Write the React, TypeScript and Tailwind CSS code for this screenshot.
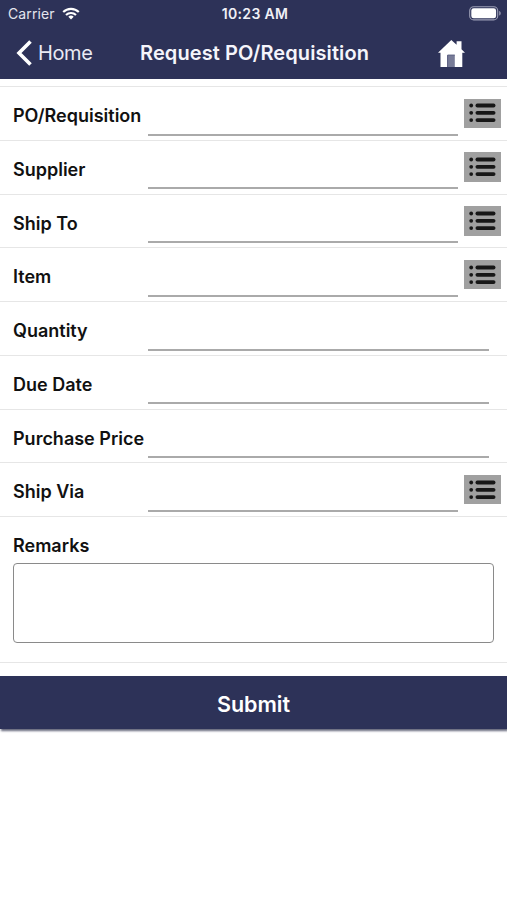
type Field = {
  label: string;
  lookup: boolean;
};

const FIELDS: Field[] = [
  { label: "PO/Requisition", lookup: true },
  { label: "Supplier", lookup: true },
  { label: "Ship To", lookup: true },
  { label: "Item", lookup: true },
  { label: "Quantity", lookup: false },
  { label: "Due Date", lookup: false },
  { label: "Purchase Price", lookup: false },
  { label: "Ship Via", lookup: true },
];

function WifiIcon() {
  return (
    <svg width="18" height="13" viewBox="0 0 18 13" fill="none" stroke="white" strokeWidth="2.1">
      <path d="M1.2 5.1a11 11 0 0 1 15.6 0" />
      <path d="M4 8a7.1 7.1 0 0 1 10 0" />
      <path d="M9 12.6 6.3 9.8a3.9 3.9 0 0 1 5.4 0Z" fill="white" stroke="none" />
    </svg>
  );
}

function BatteryIcon() {
  return (
    <svg width="33" height="15" viewBox="0 0 33 15">
      <rect x="0.7" y="0.7" width="28" height="13.2" rx="4" fill="none" stroke="#9c9eb5" strokeWidth="1.1" />
      <rect x="2.3" y="2.3" width="24.8" height="10" rx="2.4" fill="white" />
      <path d="M30.2 5v4.6c2-.7 2-3.9 0-4.6Z" fill="#9c9eb5" />
    </svg>
  );
}

function HomeIcon() {
  return (
    <svg width="27" height="29" viewBox="0 0 27 29">
      <path d="M13.300 1 0 13.800h2.500V28h21.800V13.800H27l-3.500-3.500V2.300h-4.900v3.500Z" fill="white" />
      <path d="M9.600 28V16.100h7.200V28Z" fill="#777b97" />
      <path d="M9.600 28V16.100h7.200" fill="none" stroke="#55597d" />
    </svg>
  );
}

function ListIcon() {
  return (
    <svg width="27" height="20" viewBox="0 0 27 20" fill="#171717">
      <circle cx="2.2" cy="2.5" r="1.9" />
      <circle cx="2.2" cy="9.8" r="1.9" />
      <circle cx="2.2" cy="17.1" r="1.9" />
      <rect x="6.5" y="0.6" width="20" height="3.800" rx="1.9" />
      <rect x="6.5" y="7.9" width="20" height="3.800" rx="1.9" />
      <rect x="6.5" y="15.2" width="20" height="3.800" rx="1.9" />
    </svg>
  );
}

function FieldRow({ label, lookup }: Field) {
  return (
    <div className="flex h-[53.75px] border-t border-[#e6e6e6] pl-[13px]">
      <label className="w-[135px] shrink-0 whitespace-nowrap pt-[17px] text-[18px] leading-6 font-semibold">
        {label}
      </label>
      <input
        type="text"
        aria-label={label}
        className={`h-[48.5px] min-w-0 flex-1 border-b-2 border-[#aaaaaa] outline-none ${
          lookup ? "mr-[6px]" : "mr-[18px]"
        }`}
      />
      {lookup && (
        <button
          type="button"
          aria-label={`Select ${label}`}
          className="mt-[11.5px] mr-[6px] flex h-[29.5px] w-[37px] items-center justify-center bg-[#a0a0a0]"
        >
          <ListIcon />
        </button>
      )}
    </div>
  );
}

export default function App() {
  return (
    <main className="h-[900px] w-[507px] overflow-hidden bg-white font-[Inter,sans-serif] text-[#111111]">
      <header className="h-[79px] bg-[#2d3258] text-white">
        <div className="grid h-[27px] grid-cols-3 items-center pr-[5px] pl-[8px]">
          <div className="flex items-center gap-[7px] text-[14px] tracking-[0.1px] text-[#e4e5ee]">
            <span>Carrier</span>
            <WifiIcon />
          </div>
          <span className="text-center text-[14px] font-semibold tracking-[0.3px] text-[#f0f0f6]">
            10:23 AM
          </span>
          <div className="flex justify-end">
            <BatteryIcon />
          </div>
        </div>
        <div className="flex h-[52px] items-center pl-[16px]">
          <button
            type="button"
            className="flex w-[124px] items-center gap-[6px] text-[20px] tracking-[-0.4px] text-[#e9eaf4]"
          >
            <svg width="16" height="26" viewBox="0 0 16 26" fill="none" stroke="white" strokeWidth="3.6">
              <path d="M14.500 1.500 3 13l11.500 11.500" />
            </svg>
            Home
          </button>
          <h1 className="w-[298px] whitespace-nowrap text-[20px] font-semibold tracking-[0.1px] text-[#f5f5fb]">
            Request PO/Requisition
          </h1>
          <button type="button" aria-label="Home">
            <HomeIcon />
          </button>
        </div>
      </header>

      <form className="pt-[7px]" onSubmit={(e) => e.preventDefault()}>
        {FIELDS.map((field) => (
          <FieldRow key={field.label} label={field.label} lookup={field.lookup} />
        ))}

        {/* Remarks */}
        <div className="h-[147px] border-y border-[#e6e6e6] px-[13px] pt-[17px]">
          <label className="block text-[18px] leading-6 font-semibold">Remarks</label>
          <textarea
            aria-label="Remarks"
            className="mt-[5px] block h-[80px] w-full resize-none rounded-[4px] border-[1.5px] border-[#8a8a8a] outline-none"
          />
        </div>

        <button
          type="submit"
          className="mt-[12.5px] block h-[53px] w-full bg-[#2d3258] pt-[4px] text-[21.5px] font-semibold text-white shadow-[1px_2px_2px_#66687c]"
        >
          Submit
        </button>
      </form>
    </main>
  );
}
